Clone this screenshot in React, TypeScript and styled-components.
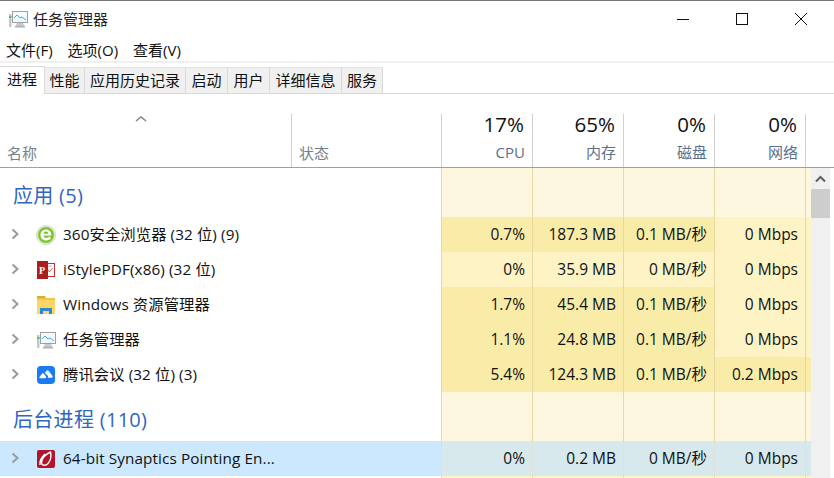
import React from "react";
import styled, { createGlobalStyle } from "styled-components";

const Global = createGlobalStyle`
  html, body { margin: 0; padding: 0; background: #fff; overflow: hidden; }
  #root { width: 834px; height: 478px; overflow: hidden; }
  * { box-sizing: border-box; }
`;

const FONT = `"Open Sans", "Noto Sans CJK SC", sans-serif`;

const Win = styled.div`
  width: 834px; height: 478px; display: flex; flex-direction: column;
  background: #fff; font-family: ${FONT}; color: #111; overflow: hidden;
  border-top: 1px solid #777;
`;
const TitleBar = styled.div`
  height: 39px; flex: none; display: flex; align-items: center; padding: 0 4px 3px 8px;
`;
const TitleText = styled.div`
  margin-left: 5px; font-size: 15px; line-height: 20px; flex: 1; color: #222; padding-bottom: 1px;
`;
const WinButtons = styled.div`display: flex; height: 36px;`;
const WinButton = styled.div`
  width: 59px; display: flex; align-items: center; justify-content: center;
`;
const MenuBar = styled.div`
  height: 21px; flex: none; display: flex; gap: 15px; padding: 0 0 3px 6px; align-items: center;
  font-size: 15px; color: #111;
`;
const Rule = styled.div`height: 2px; background: #f0f0f0; flex: none;`;
const TabRow = styled.div`
  height: 31px; flex: none; display: flex; align-items: flex-end; border-bottom: 1px solid #d9d9d9;
`;
const Tab = styled.div<{ $active?: boolean; $w: number }>`
  width: ${p => p.$w}px; flex: none;
  height: ${p => (p.$active ? 28 : 26)}px;
  padding-bottom: ${p => (p.$active ? 4 : 2)}px;
  margin-bottom: ${p => (p.$active ? -1 : 0)}px;
  display: flex; align-items: center; justify-content: center; font-size: 15px; color: #111;
  background: ${p => (p.$active ? "#fff" : "#f0f0f0")};
  border-right: 1px solid #d9d9d9;
  border-top: 1px solid ${p => (p.$active ? "#d9d9d9" : "#e4e4e4")};
  position: relative; z-index: ${p => (p.$active ? 1 : 0)};
`;
const Spacer = styled.div`height: 20px; flex: none;`;
const TableArea = styled.div`flex: 1; display: flex; flex-direction: column; min-height: 0;`;
const HeadRow = styled.div`
  height: 54px; flex: none; display: grid;
  grid-template-columns: 292px 150px repeat(4, 91px) 1fr;
  border-bottom: 1px solid #a0a0a0;
`;
const NameHead = styled.div`
  position: relative; display: flex; align-items: flex-end; padding: 0 0 4px 7px;
  font-size: 15px; color: #77818c; border-right: 1px solid #d0d0d0;
`;
const SortCaret = styled.svg`position: absolute; left: 135px; top: 1px;`;
const StatusHead = styled.div`
  display: flex; align-items: flex-end; padding: 0 0 4px 7px;
  font-size: 15px; color: #77818c; border-right: 1px solid #d0d0d0;
`;
const MetricHead = styled.div`
  display: flex; flex-direction: column; align-items: flex-end; padding-right: 7px;
  border-right: 1px solid #d0d0d0;
`;
const Percent = styled.div`font-size: 20.5px; line-height: 24px; height: 24px; margin: -2px 1px 0 0; color: #111;`;
const MetricLabel = styled.div`font-size: 15px; line-height: 20px; margin-top: 6px; color: #5b6f8a;`;
const BodyWrap = styled.div`flex: 1; display: flex; min-height: 0;`;
const Rows = styled.div`width: 810px; flex: none; display: flex; flex-direction: column;`;
const Row = styled.div<{ $h?: number }>`
  height: ${p => p.$h ?? 35}px; flex: none; display: grid;
  grid-template-columns: 442px repeat(4, 91px) 1fr;
`;
const NameCell = styled.div<{ $sel?: boolean }>`
  display: flex; align-items: center; background: ${p => (p.$sel ? "#cce8ff" : "#fff")};
  font-size: 15.3px; line-height: 20px; letter-spacing: 0.1px; color: #111; white-space: nowrap;
`;
const GroupCell = styled.div<{ $top: number }>`
  padding: ${p => p.$top}px 0 0 13px; font-size: 20px; letter-spacing: 0.3px; color: #2f66c4; line-height: 26px; background: #fff;
`;
const Chevron = styled.svg`margin-left: 11px; flex: none; margin-bottom: 1px;`;
const IconSlot = styled.div`width: 20px; height: 20px; margin: 0 0 0 16px; flex: none; display: flex; align-items: center; justify-content: center;`;
const Label = styled.span`margin: 0 0 1px 7px; color: #111;`;
const ValueCell = styled.div<{ $tone: string; $edge?: boolean }>`
  background: ${p => p.$tone};
  border-left: 1px solid ${p => (p.$edge ? "#dfe0dc" : "#e9d7a2")};
  margin-left: -1px;
  display: flex; align-items: center; justify-content: flex-end;
  padding: 0 8px 1px 0; font-size: 15.5px; line-height: 20px; color: #111; white-space: nowrap;
`;
const ScrollBar = styled.div`width: 19px; flex: none; margin-left: 1px; background: #f0f0f0; display: flex; flex-direction: column; align-items: center;`;
const ScrollArrow = styled.div`height: 21px; flex: none; width: 100%; display: flex; align-items: center; justify-content: center;`;
const Thumb = styled.div`width: 100%; height: 29px; background: #cdcdcd; flex: none;`;

const Y = "#f9eca9", L = "#fdf3c4", P = "#fef7e0", S = "#d8e9ee";

const E360 = () => (
  <svg width="20" height="20" viewBox="0 0 20 20">
    <circle cx="10" cy="10" r="9.500" fill="#e4efd8" stroke="#c9d4c2" strokeWidth="0.800" />
    <circle cx="10" cy="10" r="8" fill="#7cc62c" />
    <path d="M4.500 10c0-3.300 2.400-5.500 5.500-5.500 3.300 0 5.400 2.300 5.400 6H7.500c.2 1.500 1.300 2.400 2.800 2.400 1.300 0 2.400-.5 3.300-1.300l1.500 2c-1.400 1.200-3 1.900-4.900 1.900-3.500 0-5.700-2.300-5.700-5.500zM7.500 8.700h5c-.1-1.300-1-2.100-2.400-2.100S7.800 7.400 7.500 8.700z" fill="#fff" />
  </svg>
);
const PdfIcon = () => (
  <svg width="20" height="20" viewBox="0 0 20 20">
    <rect x="9" y="3.500" width="9.500" height="13" fill="#fff" stroke="#c0342c" strokeWidth="1" />
    <path d="M12 10l1.500 2 3-4" fill="none" stroke="#d8605a" strokeWidth="1" />
    <path d="M12 6h4" stroke="#e6a5a0" strokeWidth="1" />
    <rect x="1" y="1" width="11" height="18" fill="#a81f1c" />
    <text x="3" y="14" fontSize="10" fontWeight="700" fontFamily="Liberation Serif, serif" fill="#fff">P</text>
  </svg>
);
const FolderIcon = () => (
  <svg width="20" height="20" viewBox="0 0 20 20">
    <path d="M1 1h8l1 2H1z" fill="#e0a92e" />
    <rect x="1" y="3" width="18" height="16" fill="#fbd667" />
    <rect x="1" y="3" width="18" height="2" fill="#f1c348" />
    <path d="M4 19v-6h12v6h-3v-3H7v3z" fill="#2f86d6" />
  </svg>
);
const TaskIcon = () => (
  <svg width="20" height="20" viewBox="0 0 20 20">
    <rect x="4.500" y="2.500" width="15" height="11" fill="#f4fbff" stroke="#9aa0a4" />
    <path d="M6 9l3-3 3 3 2-1 4 3" fill="none" stroke="#4aa8e0" strokeWidth="1" />
    <path d="M9 14h6l1.500 3h-9z" fill="#c6c9cb" />
    <rect x="7" y="17" width="10" height="1.500" fill="#aeb2b5" />
    <rect x="1" y="5" width="2.500" height="13" fill="#c4c8ca" />
    <rect x="1" y="7" width="2.500" height="2" fill="#54c25a" />
  </svg>
);
const MeetIcon = () => (
  <svg width="20" height="20" viewBox="0 0 20 20">
    <rect x="1" y="1" width="18" height="18" rx="4" fill="#1a7bf2" />
    <path d="M3.500 12l2.600-3.200c.5-.6 1.200-.6 1.700 0l2.200 2.800c.6.800 0 1.600-.8 1.600H4.300c-.9 0-1.300-.6-.8-1.200z" fill="#fff" />
    <path d="M8.800 8l1.800-2.300c.6-.7 1.400-.7 2 0l3.900 5.400c.5.700.1 1.600-.8 1.600h-3.900c.6-.6.500-1.400 0-2z" fill="#fff" />
  </svg>
);
const SynIcon = () => (
  <svg width="20" height="20" viewBox="0 0 20 20">
    <rect x="1" y="1" width="18" height="18" rx="2" fill="#b3142a" />
    <path d="M14.500 3C9.500 5 5 10 5.500 14c.4 3 4.500 2.800 6.500.5 2.500-3 3.500-7.500 2.500-11.500zM9 5C5.500 8 3.500 12 4 16" fill="none" stroke="#fff" strokeWidth="1.400" />
  </svg>
);

const Arrow = () => (
  <Chevron width="9" height="12" viewBox="0 0 9 12">
    <path d="M1.500 1.500L6.500 6l-5 4.500" fill="none" stroke="#9a9a9a" strokeWidth="2" />
  </Chevron>
);

type Item = { icon: React.ReactNode; name: string; vals: [string, string][] };
const apps: Item[] = [
  { icon: <E360 />, name: "360安全浏览器 (32 位) (9)", vals: [["0.7%", Y], ["187.3 MB", Y], ["0.1 MB/秒", Y], ["0 Mbps", L]] },
  { icon: <PdfIcon />, name: "iStylePDF(x86) (32 位)", vals: [["0%", L], ["35.9 MB", L], ["0 MB/秒", L], ["0 Mbps", L]] },
  { icon: <FolderIcon />, name: "Windows 资源管理器", vals: [["1.7%", Y], ["45.4 MB", Y], ["0.1 MB/秒", Y], ["0 Mbps", L]] },
  { icon: <TaskIcon />, name: "任务管理器", vals: [["1.1%", Y], ["24.8 MB", Y], ["0.1 MB/秒", Y], ["0 Mbps", L]] },
  { icon: <MeetIcon />, name: "腾讯会议 (32 位) (3)", vals: [["5.4%", Y], ["124.3 MB", Y], ["0.1 MB/秒", Y], ["0.2 Mbps", Y]] },
];

const Group = ({ text, h, top, tone }: { text: string; h: number; top: number; tone: string }) => (
  <Row $h={h}>
    <GroupCell $top={top}>{text}</GroupCell>
    {[0, 1, 2, 3, 4].map(i => <ValueCell key={i} $tone={tone} />)}
  </Row>
);

const AppRow = ({ item, sel }: { item: Item; sel?: boolean }) => (
  <Row>
    <NameCell $sel={sel}>
      <Arrow />
      <IconSlot>{item.icon}</IconSlot>
      <Label>{item.name}</Label>
    </NameCell>
    {item.vals.map(([v, t], i) => <ValueCell key={i} $tone={t} $edge={sel}>{v}</ValueCell>)}
    <ValueCell $tone={item.vals[3][1]} $edge={sel} />
  </Row>
);

const tabs: [string, number][] = [["进程", 45], ["性能", 40], ["应用历史记录", 101], ["启动", 42], ["用户", 42], ["详细信息", 72], ["服务", 41]];

export default function App() {
  return (
    <Win>
      <Global />
      <TitleBar>
        <TaskIcon />
        <TitleText>任务管理器</TitleText>
        <WinButtons>
          <WinButton>
            <svg width="14" height="14" viewBox="0 0 14 14"><path d="M1 7.500h12" stroke="#111" /></svg>
          </WinButton>
          <WinButton>
            <svg width="14" height="14" viewBox="0 0 14 14"><rect x="1.500" y="1.500" width="11" height="11" fill="none" stroke="#111" /></svg>
          </WinButton>
          <WinButton>
            <svg width="14" height="14" viewBox="0 0 14 14"><path d="M1 1l12 12M13 1L1 13" stroke="#111" /></svg>
          </WinButton>
        </WinButtons>
      </TitleBar>
      <MenuBar><span>文件(F)</span><span>选项(O)</span><span>查看(V)</span></MenuBar>
      <Rule />
      <TabRow>
        {tabs.map(([t, w], i) => <Tab key={t} $w={w} $active={i === 0}>{t}</Tab>)}
      </TabRow>
      <Spacer />
      <TableArea>
        <HeadRow>
          <NameHead>
            <SortCaret width="12" height="8" viewBox="0 0 12 8"><path d="M1 6l5-4 5 4" fill="none" stroke="#7d8591" strokeWidth="1.500" /></SortCaret>
            名称
          </NameHead>
          <StatusHead>状态</StatusHead>
          <MetricHead><Percent>17%</Percent><MetricLabel>CPU</MetricLabel></MetricHead>
          <MetricHead><Percent>65%</Percent><MetricLabel>内存</MetricLabel></MetricHead>
          <MetricHead><Percent>0%</Percent><MetricLabel>磁盘</MetricLabel></MetricHead>
          <MetricHead><Percent>0%</Percent><MetricLabel>网络</MetricLabel></MetricHead>
        </HeadRow>
        <BodyWrap>
          <Rows>
            <Group text="应用 (5)" h={49} top={15} tone={P} />
            {apps.map(a => <AppRow key={a.name} item={a} />)}
            <Group text="后台进程 (110)" h={49} top={15} tone={P} />
            <AppRow sel item={{ icon: <SynIcon />, name: "64-bit Synaptics Pointing En...", vals: [["0%", S], ["0.2 MB", S], ["0 MB/秒", S], ["0 Mbps", S]] }} />
            <Group text="" h={4} top={0} tone={L} />
          </Rows>
          <ScrollBar>
            <ScrollArrow>
              <svg width="11" height="8" viewBox="0 0 11 8"><path d="M1 6.500l4.500-4.500 4.500 4.500" fill="none" stroke="#606060" strokeWidth="2" /></svg>
            </ScrollArrow>
            <Thumb />
          </ScrollBar>
        </BodyWrap>
      </TableArea>
    </Win>
  );
}
